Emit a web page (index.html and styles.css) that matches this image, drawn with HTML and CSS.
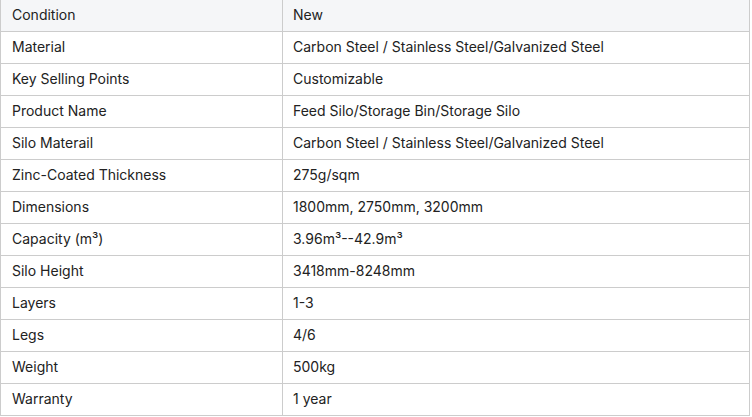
FILE: index.html
```html
<!DOCTYPE html>
<html>
<head>
<meta charset="utf-8">
<link rel="stylesheet" href="styles.css">
</head>
<body>
<table class="spec">
  <tr class="head"><td class="k">Condition</td><td class="v">New</td></tr>
  <tr><td class="k">Material</td><td class="v">Carbon Steel / Stainless Steel/Galvanized Steel</td></tr>
  <tr><td class="k">Key Selling Points</td><td class="v">Customizable</td></tr>
  <tr><td class="k">Product Name</td><td class="v">Feed Silo/Storage Bin/Storage Silo</td></tr>
  <tr><td class="k">Silo Materail</td><td class="v">Carbon Steel / Stainless Steel/Galvanized Steel</td></tr>
  <tr><td class="k">Zinc-Coated Thickness</td><td class="v">275g/sqm</td></tr>
  <tr><td class="k">Dimensions</td><td class="v">1800mm, 2750mm, 3200mm</td></tr>
  <tr><td class="k">Capacity (m³)</td><td class="v">3.96m³--42.9m³</td></tr>
  <tr><td class="k">Silo Height</td><td class="v">3418mm-8248mm</td></tr>
  <tr><td class="k">Layers</td><td class="v">1-3</td></tr>
  <tr><td class="k">Legs</td><td class="v">4/6</td></tr>
  <tr><td class="k">Weight</td><td class="v">500kg</td></tr>
  <tr><td class="k">Warranty</td><td class="v">1 year</td></tr>
</table>
</body>
</html>
```
FILE: styles.css
```css
html, body {
  margin: 0;
  padding: 0;
  background: #ffffff;
}
.spec {
  border-collapse: collapse;
  width: 750px;
  table-layout: fixed;
  font-family: Inter, "Noto Sans", sans-serif;
  font-size: 14px;
  color: #222222;
}
.spec td {
  border: 1px solid #cccccc;
  height: 32px;
  padding: 0 10px;
  box-sizing: border-box;
  vertical-align: middle;
  line-height: 20px;
}
.spec tr:first-child td {
  border-top: none;
  height: 31px;
}
.spec .k {
  width: 282px;
  padding-left: 11px;
}
.spec .v {
  padding-left: 10px;
}
.spec .head td {
  background: #f5f6f8;
}
```
